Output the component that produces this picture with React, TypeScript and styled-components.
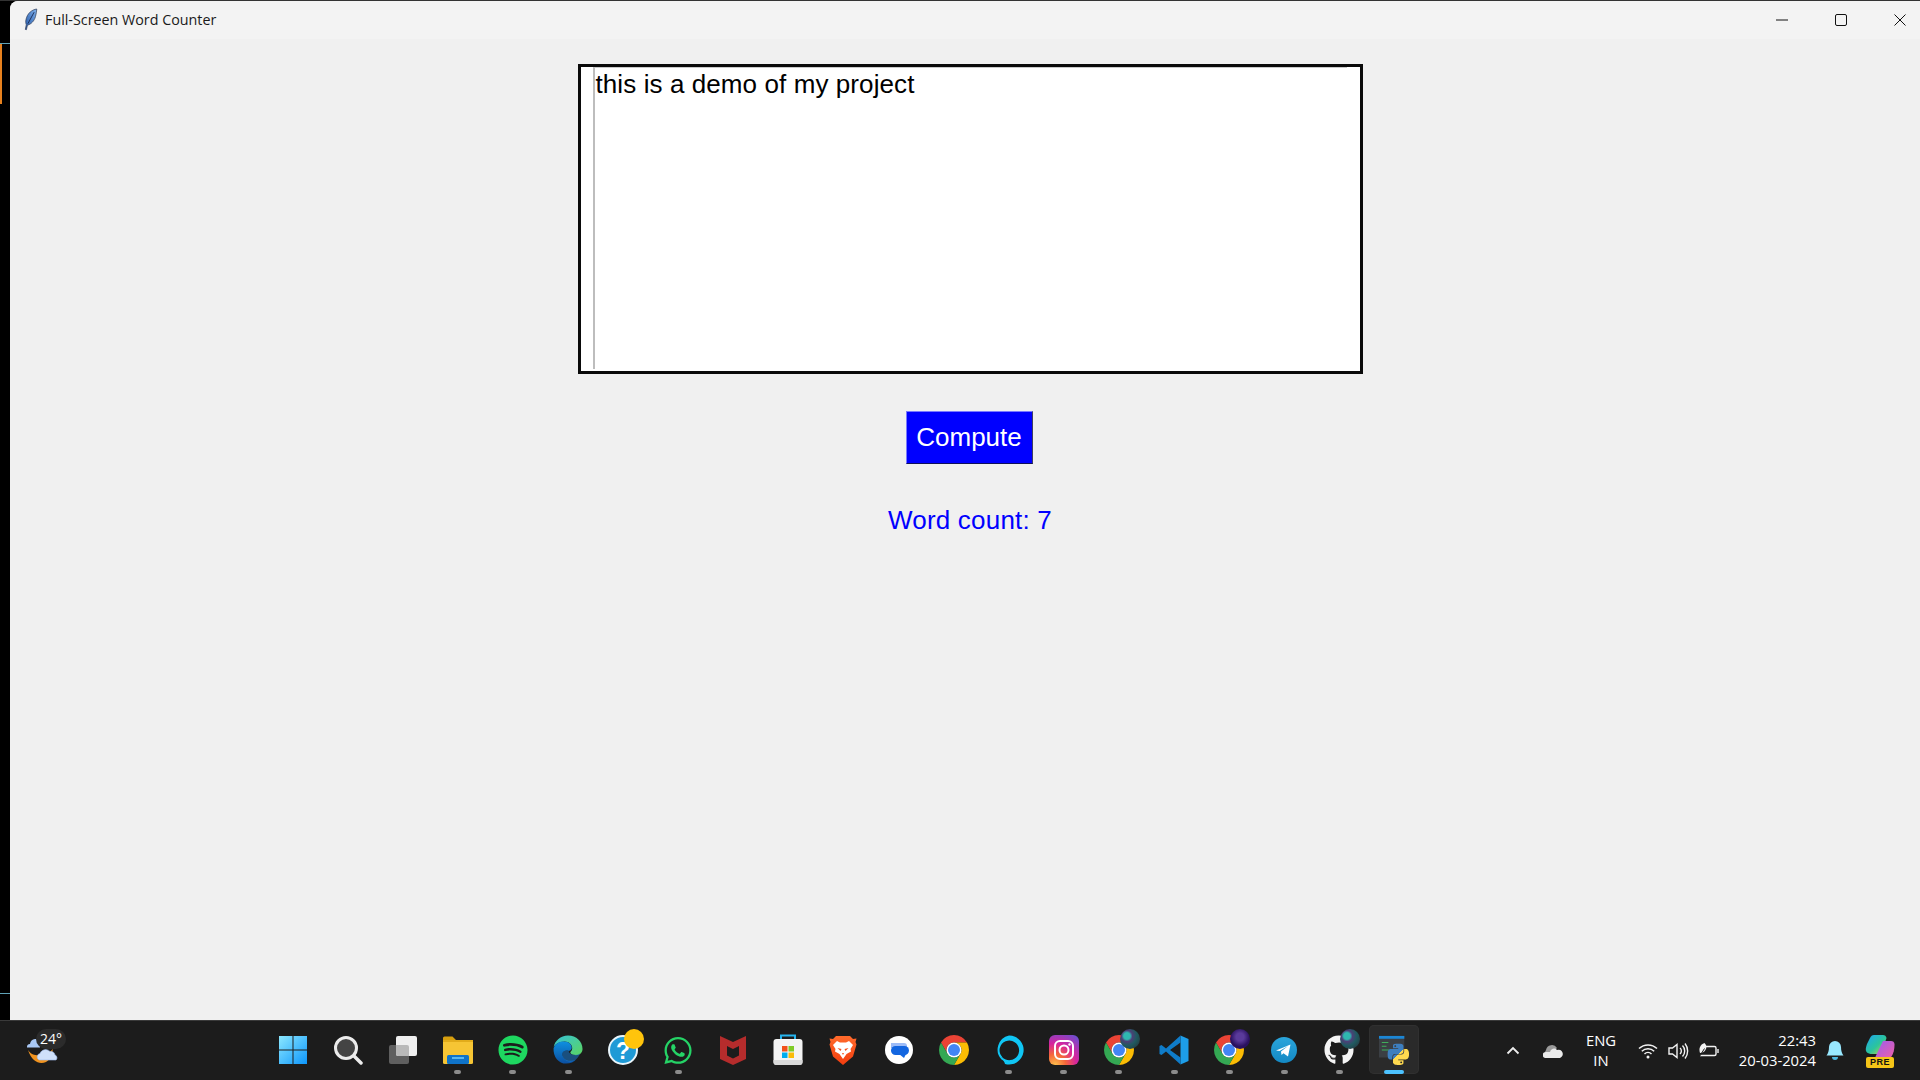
import React from "react";
import styled, { createGlobalStyle } from "styled-components";
import { FaSpotify, FaWhatsapp, FaGithub } from "react-icons/fa";

const Global = createGlobalStyle`
  html, body { margin: 0; padding: 0; background: #000; }
  * { box-sizing: border-box; }
`;

const Screen = styled.div`
  width: 1920px; height: 1080px; overflow: hidden;
  display: grid; grid-template-rows: 1fr 60px;
  background: #000;
`;
const Desktop = styled.div`
  display: flex; min-height: 0;
  background: linear-gradient(#333 0 1px, #000 1px);
`;
const EdgeStrip = styled.div`
  width: 10px; flex: none; padding-top: 43px;
  display: flex; flex-direction: column;
`;
const EdgeLine = styled.div`
  height: 1px; background: #5fa3b8; flex: none;
`;
const EdgeAccent = styled.div`
  width: 2px; height: 60px; background: #e8821e; flex: none; margin-bottom: 889px;
`;
const Window = styled.div`
  flex: 1; margin-top: 1px; border-top-left-radius: 8px; overflow: hidden;
  background: #f0f0f0; display: flex; flex-direction: column;
`;
const TitleBar = styled.div`
  height: 38px; flex: none; display: flex; align-items: center;
  padding: 0 14px 2px 13px; background: #f3f3f3;
`;
const TitleText = styled.span`
  margin-left: 6px;
  font: 14.3px "Open Sans", sans-serif; color: #1a1a1a;
`;
const Controls = styled.div`
  margin-left: auto; display: flex; gap: 47px; align-items: center;
  padding-top: 1px;
`;
const Content = styled.main`
  flex: 1; display: flex; flex-direction: column; align-items: center;
  padding: 25px 0 0 10px;
`;
const TextBox = styled.div`
  width: 785px; height: 310px; flex: none; border: 3px solid #0a0a0a; background: #fff;
  display: flex; padding-right: 13px;
`;
const Gutter = styled.div`
  width: 12px; flex: none;
`;
const Editor = styled.div`
  flex: 1; border-left: 2px solid #bdbdbd; border-top: 1px solid #c9c9c9;
  margin-bottom: 2px; padding: 0 0 0 1px;
  font: 26px/32px "Liberation Sans", Arial, sans-serif; color: #000;
  letter-spacing: 0.09px;
`;
const ComputeButton = styled.button`
  margin: 37px 2px 0 0; width: 127px; height: 53px; flex: none; padding: 0;
  background: #0000ff; color: #fff; cursor: pointer;
  border-style: solid; border-width: 1px;
  border-color: #7a7aff #404060 #10105a #7a7aff;
  font: 26px "Liberation Sans", Arial, sans-serif;
`;
const WordCount = styled.div`
  margin-top: 40px; color: #0000ff;
  font: 26px/32px "Liberation Sans", Arial, sans-serif;
  letter-spacing: 0.2px;
`;

const Taskbar = styled.footer`
  display: flex; background: #1c1c1c; border-top: 1px solid #3a3a3a;
  font-family: "Open Sans", sans-serif; color: #fff;
`;
const Weather = styled.div`
  width: 265px; flex: none; position: relative; padding: 14px 0 0 26px;
`;
const TempPill = styled.span`
  position: absolute; left: 36px; top: 8px; width: 30px; height: 20px; border-radius: 10px;
  background: #2b2b2b; font-size: 14px; line-height: 20px; text-align: center;
`;
const Apps = styled.div`
  display: flex; align-items: flex-start;
`;
const AppCell = styled.div<{ $active?: boolean }>`
  width: 50px; flex: none; height: 49px; margin: 4px 2.55px 0; position: relative;
  display: flex; flex-direction: column; align-items: center; padding-top: 10px;
  border-radius: 5px;
  ${p => p.$active ? "background: #2a2a2a; box-shadow: inset 0 0 0 1px #303030;" : ""}
`;
const AppIcon = styled.div`
  width: 30px; height: 30px; flex: none; display: flex; align-items: center; justify-content: center;
`;
const RunDot = styled.span<{ $active?: boolean }>`
  margin-top: 5px; height: 4px; border-radius: 2px; flex: none;
  width: ${p => p.$active ? 20 : 7}px;
  background: ${p => p.$active ? "#4cc2ff" : "#8c8c8c"};
`;
const Badge = styled.span<{ $bg: string }>`
  position: absolute; left: 26px; top: 4px; width: 20px; height: 20px; border-radius: 50%;
  background: ${p => p.$bg};
`;
const Tray = styled.div`
  margin-left: auto; display: flex; align-items: center; padding: 0 20px 0 0;
`;
const TrayItem = styled.div<{ $w: number; $gap?: number }>`
  width: ${p => p.$w}px; margin-left: ${p => p.$gap ?? 0}px; flex: none;
  display: flex; align-items: center; justify-content: center;
`;
const Lang = styled.div`
  width: 40px; margin: -2px 0 0 8px; flex: none; text-align: center;
  font-size: 14.8px; line-height: 20px;
`;
const Clock = styled.div`
  width: 93px; flex: none; margin: -2px 4px 0 0; text-align: right; font-size: 14.8px; line-height: 20px;
`;
const CopilotWrap = styled.div`
  width: 40px; flex: none; position: relative; height: 34px; margin-left: 10px; display: flex; justify-content: center;
`;
const PreTag = styled.span`
  position: absolute; left: 6px; bottom: 0; width: 28px; height: 11px; background: #f5c518; border-radius: 2px;
  color: #111; font: 700 9px/11px "Liberation Sans", sans-serif; text-align: center; letter-spacing: 0.5px;
`;

const Feather = () => (
  <svg width="16" height="23" viewBox="0 0 14 22">
    <defs><linearGradient id="fe" x1="1" y1="0" x2="0" y2="1"><stop offset="0" stopColor="#7fb0ea" /><stop offset="1" stopColor="#2458a8" /></linearGradient></defs>
    <path d="M12.500 1C8 1.500 3.500 5 2.200 11c-.4 2-.3 3.600.3 5l-.9 4.500 1 .2 1-4.300c3.500-.8 6.500-4 7.700-8.200.6-2.400 1.100-5 1.200-7.200z" fill="url(#fe)" stroke="#33415c" strokeWidth=".7" />
    <path d="M10 4 4 15" stroke="#1b2c55" strokeWidth=".9" />
  </svg>
);
const MinIcon = () => <svg width="12" height="12" viewBox="0 0 12 12"><path d="M0 6h12" stroke="#111" strokeWidth="1" /></svg>;
const MaxIcon = () => <svg width="12" height="12" viewBox="0 0 12 12"><rect x=".5" y=".5" width="11" height="11" rx="1.500" fill="none" stroke="#111" /></svg>;
const CloseIcon = () => <svg width="12" height="12" viewBox="0 0 12 12"><path d="M.5.5l11 11M11.500.5l-11 11" stroke="#111" /></svg>;

const WeatherIcon = () => (
  <svg width="32" height="30" viewBox="0 0 32 30" style={{ display: "block" }}>
    <path d="M1 12.500a3.200 3.200 0 0 1 3-3.500 6 6 0 0 1 5-5 5 5 0 0 1 5 3v5.500z" fill="#a9c8f5" />
    <path d="M2 15c3 5 9 6 14 5 4-.8 8-2.500 11-6-1.500 5-1.500 10-7 13-6 2.500-14 .5-18-12z" fill="#f0931f" />
    <path d="M13 25a3.500 3.500 0 0 1 1-6.500 6 6 0 0 1 10-2 4.500 4.500 0 0 1 5 3.500 3 3 0 0 1 1 5z" fill="#cfe0fa" stroke="#9dbbe9" strokeWidth=".6" />
  </svg>
);
const WinIcon = () => (
  <svg width="30" height="30" viewBox="0 0 30 30">
    <defs><linearGradient id="wn" x1="0" y1="0" x2="1" y2="1"><stop offset="0" stopColor="#8ce8ff" /><stop offset="1" stopColor="#0d96fb" /></linearGradient></defs>
    <path d="M1 1h13.500v13.500H1zM15.500 1H29v13.500H15.500zM1 15.500h13.500V29H1zM15.500 15.500H29V29H15.500z" fill="url(#wn)" />
  </svg>
);
const SearchIcon = () => (
  <svg width="30" height="30" viewBox="0 0 30 30">
    <circle cx="13" cy="13" r="10.500" fill="#444" stroke="#ececec" strokeWidth="3" />
    <path d="M21 21l7 7" stroke="#ececec" strokeWidth="3.500" strokeLinecap="round" />
  </svg>
);
const TaskViewIcon = () => (
  <svg width="30" height="30" viewBox="0 0 30 30">
    <rect x="1" y="10" width="20" height="19" rx="2" fill="#5f5f5f" />
    <rect x="8" y="1" width="21" height="20" rx="2" fill="#efefef" />
    <path d="M8 10h11a2 2 0 0 1 2 2v9H10a2 2 0 0 1-2-2z" fill="#b9b9b9" />
  </svg>
);
const FolderIcon = () => (
  <svg width="30" height="30" viewBox="0 0 30 30">
    <path d="M0 3a1.500 1.500 0 0 1 1.500-1.500h8L13 5h-13z" fill="#d79f0e" />
    <rect x="0" y="5" width="30" height="24" rx="1.500" fill="#f6c534" />
    <path d="M0 5h30v2H0z" fill="#e2ac1a" />
    <rect x="4" y="20" width="22" height="9" rx="1.500" fill="#0f73c9" />
    <rect x="9" y="22" width="12" height="2" fill="#57b7f1" />
  </svg>
);
const EdgeIcon = () => (
  <svg width="32" height="32" viewBox="0 0 32 32">
    <defs>
      <linearGradient id="eg" x1="0" y1="0" x2="1" y2="1"><stop offset="0" stopColor="#36c2d8" /><stop offset="1" stopColor="#5bd55f" /></linearGradient>
      <linearGradient id="eb" x1="0" y1="0" x2="0" y2="1"><stop offset="0" stopColor="#0f8fe0" /><stop offset="1" stopColor="#0b4fa0" /></linearGradient>
    </defs>
    <path d="M16 .5C25 .5 31.500 7 31.500 15c0 4-3 6.500-7 6.500-3 0-6-1-6-3 0-1 2-1.500 2-4.500 0-4-4-7-8-7C6 7 1.500 11 .7 13 2 6 8 .5 16 .5z" fill="url(#eg)" />
    <path d="M.6 14C2.500 9 7 7 12 7c4.500 0 8 3 8 6.500 0 2-1.500 3-3 3.500-3-1-7 0-7 3.500 0 4 4 7 8 7 2.500 0 5-.5 7-2-2.500 3-6.500 5-11 5-8 0-14-7-13.400-17z" fill="url(#eb)" />
    <path d="M10 20.500c0-3.500 4-4.500 7-3.500-1 1.500 3 5 8 4 2-.2 3.500-1 4-2-1.500 5-5 9-10 9.500-5 0-9-3.500-9-8z" fill="#1a7ad0" opacity=".55" />
  </svg>
);
const HelpIcon = () => (
  <svg width="30" height="30" viewBox="0 0 30 30">
    <circle cx="15" cy="15" r="14" fill="#1f9ad6" stroke="#e9f5fb" strokeWidth="2" />
    <text x="15" y="23.500" textAnchor="middle" fontFamily="Liberation Sans" fontWeight="700" fontSize="23" fill="#fff">?</text>
  </svg>
);
const McAfeeIcon = () => (
  <svg width="30" height="30" viewBox="0 0 30 30">
    <path fillRule="evenodd" d="M2 1l13 6 13-6v23l-13 6-13-6zM9 11v9.500l6 3 6-3V11l-6 3z" fill="#b52c2c" />
  </svg>
);
const StoreIcon = () => (
  <svg width="30" height="32" viewBox="0 0 30 32">
    <path d="M8 6V1.500h14V6" fill="none" stroke="#25b4ee" strokeWidth="2" />
    <rect x="0.500" y="5" width="29" height="26" rx="3" fill="#f4f4f4" />
    <path d="M.5 26h29v2a3 3 0 0 1-3 3h-23a3 3 0 0 1-3-3z" fill="#d9d9d9" />
    <rect x="9" y="12" width="5.500" height="5.500" fill="#f1511b" />
    <rect x="15.500" y="12" width="5.500" height="5.500" fill="#80cc28" />
    <rect x="9" y="18.500" width="5.500" height="5.500" fill="#00adef" />
    <rect x="15.500" y="18.500" width="5.500" height="5.500" fill="#fbbc09" />
  </svg>
);
const BraveIcon = () => (
  <svg width="28" height="30" viewBox="0 0 28 30">
    <defs><linearGradient id="br" x1="0" y1="0" x2="0" y2="1"><stop offset="0" stopColor="#ff6a2b" /><stop offset="1" stopColor="#f33d0f" /></linearGradient></defs>
    <path d="M7 1h14l3 3 3.500-.5-1 3.500 1 2.500-3.500 12L14 30 4 21.500.5 9.500 1.500 7 .5 3.500 4 4z" fill="url(#br)" />
    <path d="M8 6l3 1.500h6L20 6l4 4-2.500 4 .5 2.500-4.500 2.500-1 1.500L14 24l-2.500-3.500-1-1.500L6 16.500l.5-2.500L4 10z" fill="#fff" />
    <path d="M8.500 13l4 1-1 2zM19.500 13l-4 1 1 2zM13 18h2l-1 2z" fill="#f4511e" />
  </svg>
);
const MessagesIcon = () => (
  <svg width="30" height="30" viewBox="0 0 30 30">
    <circle cx="15" cy="15" r="14" fill="#fff" />
    <path d="M7 8h13a3 3 0 0 1 3 3v2H7z" fill="#9dbcf7" />
    <rect x="7" y="11" width="18" height="9" rx="4.500" fill="#1366e0" />
    <path d="M15 19h7l-2 4z" fill="#1366e0" />
  </svg>
);
const ChromeIcon = () => (
  <svg width="30" height="30" viewBox="4 4 40 40">
    <path d="M6.680 14A20 20 0 0 1 41.320 14H24A10 10 0 0 0 15.340 29z" fill="#ea4335" />
    <path d="M41.320 14A20 20 0 0 1 24 44L32.660 29A10 10 0 0 0 24 14z" fill="#fbbc04" />
    <path d="M24 44A20 20 0 0 1 6.680 14L15.340 29A10 10 0 0 0 32.660 29z" fill="#34a853" />
    <circle cx="24" cy="24" r="10" fill="#fff" />
    <circle cx="24" cy="24" r="8" fill="#4285f4" />
  </svg>
);
const AlexaIcon = () => (
  <svg width="30" height="30" viewBox="0 0 30 30">
    <path fillRule="evenodd" d="M15 .5a14.500 14.500 0 1 1-4 28.400c-.5-2-1.500-4-3.500-4.500l.5-2.500A9.800 9.800 0 1 0 5.500 15c0 3 1 5 2.500 6.500l-.5 3A14.500 14.500 0 0 1 15 .5z" fill="#10c6f4" />
  </svg>
);
const InstagramIcon = () => (
  <svg width="30" height="30" viewBox="0 0 30 30">
    <defs>
      <radialGradient id="ig" cx=".2" cy="1" r="1.200">
        <stop offset="0" stopColor="#fdc04c" /><stop offset=".3" stopColor="#f5663a" /><stop offset=".6" stopColor="#d6249f" /><stop offset="1" stopColor="#6a4fd0" />
      </radialGradient>
    </defs>
    <rect width="30" height="30" rx="6" fill="url(#ig)" />
    <rect x="6" y="6" width="18" height="18" rx="5" fill="none" stroke="#fff" strokeWidth="2" />
    <circle cx="15" cy="15" r="4.500" fill="none" stroke="#fff" strokeWidth="2" />
    <circle cx="20.500" cy="9.500" r="1.200" fill="#fff" />
  </svg>
);
const VSCodeIcon = () => (
  <svg width="30" height="30" viewBox="0 0 30 30">
    <path d="M21.500.5 29.500 4v22l-8 3.500z" fill="#1d9ee9" />
    <path d="M21.500.5 7 13.500 2.500 10 .5 11v8l2 1 4.500-3.500 14.500 13v-7L11 15 21.500 7.500z" fill="#0f7cc9" />
  </svg>
);
const TelegramIcon = () => (
  <svg width="26" height="26" viewBox="0 0 26 26">
    <defs><linearGradient id="tg" x1="0" y1="0" x2="0" y2="1"><stop offset="0" stopColor="#2aa5db" /><stop offset="1" stopColor="#1489c4" /></linearGradient></defs>
    <circle cx="13" cy="13" r="13" fill="url(#tg)" />
    <path d="M5 13.500 19.500 7.500l-2.500 12-4.500-3.300L10.500 18l-.5-3.500 7-5.500-8.500 5z" fill="#fff" />
  </svg>
);
const PythonIdleIcon = () => (
  <svg width="32" height="32" viewBox="0 0 32 32">
    <defs><linearGradient id="py" x1="0" y1="0" x2="1" y2="1"><stop offset=".5" stopColor="#3d7fc0" /><stop offset=".5" stopColor="#ffd94f" /></linearGradient></defs>
    <rect x="0" y="1" width="27" height="23" fill="#3b3f44" />
    <rect x="0" y="1" width="27" height="3" fill="#1c86d4" />
    <path d="M3 8h7M3 12h5M3 16h8" stroke="#3fae5a" strokeWidth="1.200" />
    <svg x="9" y="9" width="23" height="23" viewBox="0 0 24 24">
      <path fill="url(#py)" d="M14.250.18l.9.2.73.26.59.3.45.32.34.34.25.34.16.33.1.3.04.26.02.2-.01.13V8.500l-.05.63-.13.55-.21.46-.26.38-.3.31-.33.25-.35.19-.35.14-.33.1-.3.07-.26.04-.21.02H8.770l-.69.05-.59.14-.5.22-.41.27-.33.32-.27.35-.2.36-.15.37-.1.35-.07.32-.04.27-.02.21v3.060H3.170l-.21-.03-.28-.07-.32-.12-.35-.18-.36-.26-.36-.36-.35-.46-.32-.59-.28-.73-.21-.88-.14-1.050-.05-1.230.06-1.220.16-1.040.24-.87.32-.71.36-.57.4-.44.42-.33.42-.24.4-.16.36-.1.32-.05.24-.01h.16l.06.01h8.160v-.83H6.180l-.01-2.750-.02-.37.05-.34.11-.31.17-.28.25-.26.31-.23.38-.2.44-.18.51-.15.58-.12.64-.1.71-.06.77-.04.84-.02 1.270.05zm-6.300 1.980l-.23.33-.08.41.08.41.23.34.33.22.41.09.41-.09.33-.22.23-.34.08-.41-.08-.41-.23-.33-.33-.22-.41-.09-.41.09zm13.090 3.950l.28.06.32.12.35.18.36.27.36.35.35.47.32.59.28.73.21.88.14 1.040.05 1.230-.06 1.230-.16 1.040-.24.86-.32.71-.36.57-.4.45-.42.33-.42.24-.4.16-.36.09-.32.05-.24.02-.16-.01h-8.220v.82h5.840l.01 2.760.02.36-.05.34-.11.31-.17.29-.25.25-.31.24-.38.2-.44.17-.51.15-.58.13-.64.09-.71.07-.77.04-.84.01-1.270-.04-1.070-.14-.9-.2-.73-.25-.59-.3-.45-.33-.34-.34-.25-.34-.16-.33-.1-.3-.04-.25-.02-.2.01-.13v-5.340l.05-.64.13-.54.21-.46.26-.38.3-.32.33-.24.35-.2.35-.14.33-.1.3-.06.26-.04.21-.02.13-.01h5.840l.69-.05.59-.14.5-.21.41-.28.33-.32.27-.35.2-.36.15-.36.1-.35.07-.32.04-.28.02-.21V6.070h2.090l.14.01zm-6.470 14.250l-.23.33-.08.41.08.41.23.33.33.23.41.08.41-.08.33-.23.23-.33.08-.41-.08-.41-.23-.33-.33-.23-.41-.08-.41.08z" />
    </svg>
  </svg>
);

const Chevron = () => <svg width="14" height="9" viewBox="0 0 14 9"><path d="M1.500 7.500 7 2l5.500 5.500" fill="none" stroke="#eee" strokeWidth="1.800" /></svg>;
const OneDrive = () => (
  <svg width="20" height="14" viewBox="0 0 20 14">
    <path d="M3 6a6 6 0 0 1 11-2l-6 6-6-2z" fill="#9a9a9a" />
    <path d="M3 14a3 3 0 0 1-.5-6H7a4 4 0 0 1 7-2 3.500 3.500 0 0 1 3 8z" fill="#eaeaea" />
  </svg>
);
const Wifi = () => (
  <svg width="20" height="16" viewBox="0 0 20 16" fill="none" stroke="#f2f2f2" strokeWidth="1.500">
    <path d="M1 5.500a13 13 0 0 1 18 0M3.800 8.300a9 9 0 0 1 12.400 0M6.500 11a5 5 0 0 1 7 0" />
    <circle cx="10" cy="14" r="1.500" fill="#f2f2f2" stroke="none" />
  </svg>
);
const Volume = () => (
  <svg width="21" height="18" viewBox="0 0 21 18" fill="none" stroke="#f2f2f2" strokeWidth="1.400">
    <path d="M1 6h3.500L9 2.500v13L4.500 12H1z" />
    <path d="M12 6a4 4 0 0 1 0 6M14.500 3.500a8 8 0 0 1 0 11M17 1.500a12 12 0 0 1 0 15" />
  </svg>
);
const Battery = () => (
  <svg width="21" height="18" viewBox="0 0 21 18" fill="none" stroke="#f2f2f2" strokeWidth="1.400">
    <path d="M8 4.500h8.500a1.500 1.500 0 0 1 1.500 1.500v6a1.500 1.500 0 0 1-1.500 1.500H2" />
    <path d="M20 7v4" />
    <path d="M6.500 1C2 2.500.5 6.500 2 11c4.500 0 7.500-4.500 6-8z" fill="#f2f2f2" stroke="none" />
    <path d="M1.500 14.500 6.500 6.500" stroke="#1c1c1c" strokeWidth="1" />
  </svg>
);
const Bell = () => (
  <svg width="18" height="22" viewBox="0 0 18 22">
    <path d="M9 1a6 6 0 0 1 6 6c0 4 1 6.500 2.500 8.500H.5C2 13.500 3 11 3 7a6 6 0 0 1 6-6z" fill="#98e8ff" />
    <path d="M6 17h6a3 3 0 0 1-6 0z" fill="#4cb6e0" />
  </svg>
);
const Copilot = () => (
  <svg width="30" height="26" viewBox="0 0 30 26">
    <defs>
      <linearGradient id="c1" x1="0" y1="0" x2="1" y2="1"><stop offset="0" stopColor="#1da6f2" /><stop offset=".55" stopColor="#2bc59b" /><stop offset="1" stopColor="#d9d23c" /></linearGradient>
      <linearGradient id="c2" x1="0" y1="0" x2="1" y2="1"><stop offset="0" stopColor="#9b5cf0" /><stop offset="1" stopColor="#ef5fa5" /></linearGradient>
    </defs>
    <path d="M9 1h9c2 0 3 1 3.500 3L16 20H7c-2 0-4-.5-5.500-2C0 16 1 13 2 10L5 4c1-2 2-3 4-3z" fill="url(#c1)" />
    <path d="M18 7h8c2 0 3.500 1 3.500 3.500 0 5-1 9-3 12-1 1.500-2 2-4 2h-9c-1 0-3-1-3-2z" fill="url(#c2)" />
  </svg>
);

type AppEntry = { key: string; icon: React.ReactNode; dot?: boolean; active?: boolean; badge?: string };

const avatar = "radial-gradient(circle at 35% 35%, #2fb7b0 0 18%, #4d3f78 30%, #1f5a60 52%, #2a2a34 100%)";

const apps: AppEntry[] = [
  { key: "win", icon: <WinIcon /> },
  { key: "search", icon: <SearchIcon /> },
  { key: "taskview", icon: <TaskViewIcon /> },
  { key: "files", icon: <FolderIcon />, dot: true },
  { key: "spotify", icon: <FaSpotify size={30} color="#1ed760" />, dot: true },
  { key: "edge", icon: <EdgeIcon />, dot: true },
  { key: "help", icon: <HelpIcon />, badge: "#ffc40c" },
  { key: "whatsapp", icon: <FaWhatsapp size={31} color="#25d366" />, dot: true },
  { key: "mcafee", icon: <McAfeeIcon /> },
  { key: "store", icon: <StoreIcon /> },
  { key: "brave", icon: <BraveIcon /> },
  { key: "messages", icon: <MessagesIcon /> },
  { key: "chrome", icon: <ChromeIcon /> },
  { key: "alexa", icon: <AlexaIcon />, dot: true },
  { key: "instagram", icon: <InstagramIcon />, dot: true },
  { key: "chrome2", icon: <ChromeIcon />, dot: true, badge: avatar },
  { key: "vscode", icon: <VSCodeIcon />, dot: true },
  { key: "chrome3", icon: <ChromeIcon />, dot: true, badge: "radial-gradient(circle at 50% 40%, #5a3a9a 0 25%, #2a1160 60%)" },
  { key: "telegram", icon: <TelegramIcon />, dot: true },
  { key: "github", icon: <FaGithub size={30} color="#f4f4f4" />, dot: true, badge: avatar },
  { key: "idle", icon: <PythonIdleIcon />, dot: true, active: true },
];

export default function App() {
  return (
    <Screen>
      <Global />
      <Desktop>
        <EdgeStrip>
          <EdgeLine />
          <EdgeAccent />
          <EdgeLine />
        </EdgeStrip>
        <Window>
          <TitleBar>
            <Feather />
            <TitleText>Full-Screen Word Counter</TitleText>
            <Controls>
              <MinIcon />
              <MaxIcon />
              <CloseIcon />
            </Controls>
          </TitleBar>
          <Content>
            <TextBox>
              <Gutter />
              <Editor>this is a demo of my project</Editor>
            </TextBox>
            <ComputeButton>Compute</ComputeButton>
            <WordCount>Word count: 7</WordCount>
          </Content>
        </Window>
      </Desktop>
      <Taskbar>
        <Weather>
          <WeatherIcon />
          <TempPill>24°</TempPill>
        </Weather>
        <Apps>
          {apps.map(a => (
            <AppCell key={a.key} $active={a.active}>
              <AppIcon>{a.icon}</AppIcon>
              {a.dot && <RunDot $active={a.active} />}
              {a.badge && <Badge $bg={a.badge} />}
            </AppCell>
          ))}
        </Apps>
        <Tray>
          <TrayItem $w={40}><Chevron /></TrayItem>
          <TrayItem $w={40}><OneDrive /></TrayItem>
          <Lang>ENG<br />IN</Lang>
          <TrayItem $w={30} $gap={12}><Wifi /></TrayItem>
          <TrayItem $w={30}><Volume /></TrayItem>
          <TrayItem $w={30}><Battery /></TrayItem>
          <Clock>22:43<br />20-03-2024</Clock>
          <TrayItem $w={30}><Bell /></TrayItem>
          <CopilotWrap>
            <Copilot />
            <PreTag>PRE</PreTag>
          </CopilotWrap>
        </Tray>
      </Taskbar>
    </Screen>
  );
}
